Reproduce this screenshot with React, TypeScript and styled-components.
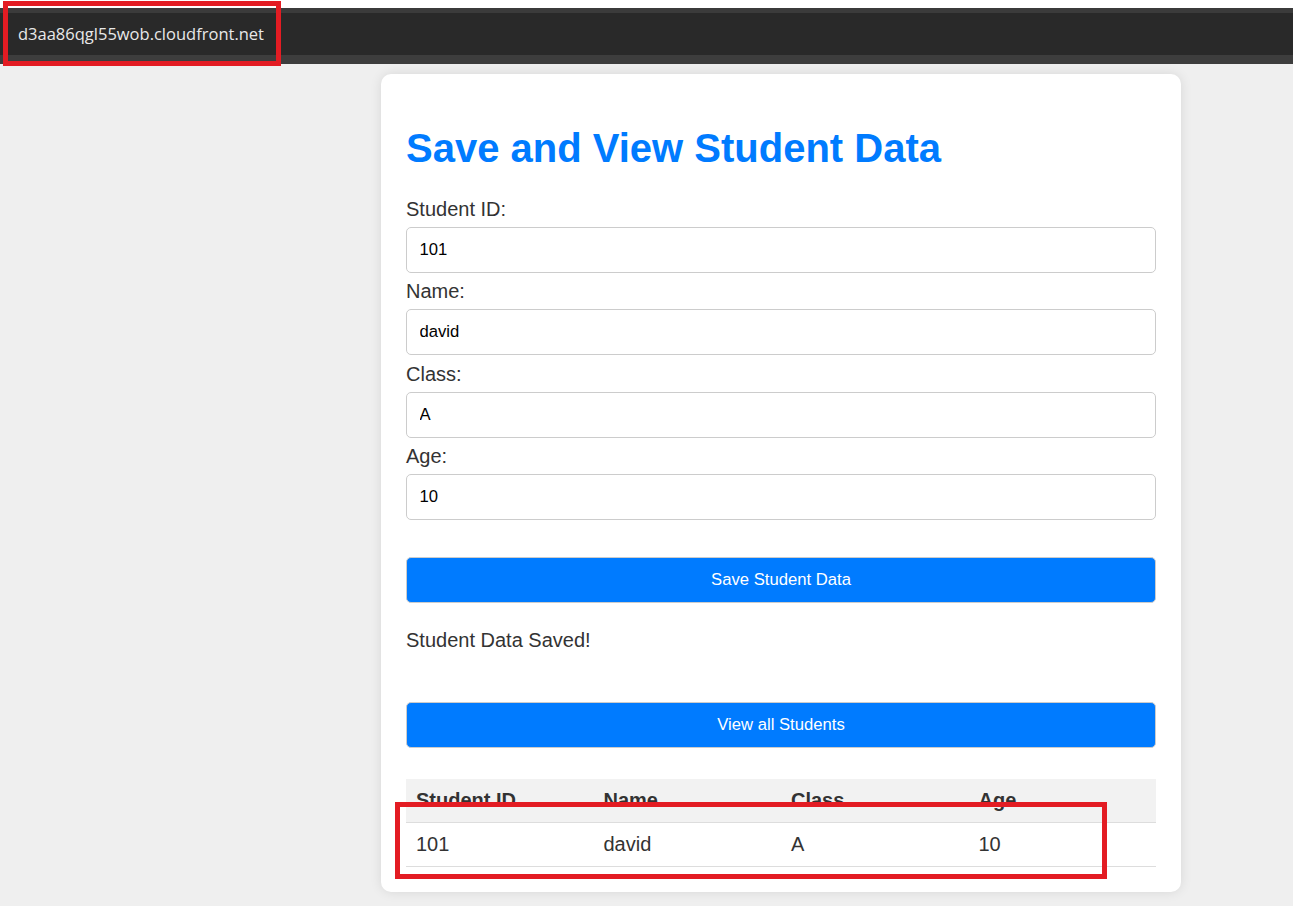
import React from "react";
import styled, { createGlobalStyle } from "styled-components";

const Global = createGlobalStyle`
  html, body { margin: 0; padding: 0; background: #efefef; }
  body { font-family: "Liberation Sans", Arial, sans-serif; }
  * { box-sizing: border-box; }
`;

const Page = styled.div`
  position: relative;
  min-height: 906px;
  background: #efefef;
`;

const BrowserBar = styled.div`
  height: 64px;
  border-top: 8px solid #ffffff;
  background: #292929;
  box-shadow: inset 0 5px 0 #3b3b3b, inset 0 -9px 0 #3d3d3d;
  display: flex;
  align-items: center;
  padding: 0 0 0 18px;
`;

const Url = styled.span`
  font-family: "Open Sans", "Noto Sans", sans-serif;
  font-size: 16.5px;
  color: #e8e8e8;
  margin-top: -6px;
`;

const Main = styled.div`
  padding: 10px 0 0 381px;
`;

const Card = styled.div`
  width: 800px;
  background: #ffffff;
  border-radius: 10px;
  box-shadow: 0 0 12px rgba(0, 0, 0, 0.1);
  padding: 25px;
  color: #333;
`;

const Title = styled.h1`
  margin: 26px 0 25.5px;
  font-size: 40px;
  line-height: 46px;
  font-weight: bold;
  color: #007bff;
`;

const Label = styled.label`
  display: block;
  font-size: 20px;
  line-height: 24px;
  color: #333;
`;

const Input = styled.input`
  display: block;
  width: 100%;
  height: 46px;
  margin: 6.25px 0;
  padding: 0 12.5px;
  border: 1px solid #ccc;
  border-radius: 5px;
  font-family: "Liberation Sans", Arial, sans-serif;
  font-size: 16.67px;
  color: #000;
  background: #fff;
  outline: none;
`;

const Button = styled.button<{ $top: number }>`
  display: block;
  width: 100%;
  height: 46px;
  margin-top: ${(p) => p.$top}px;
  border: 1px solid #ccc;
  border-radius: 5px;
  background: #007bff;
  color: #fff;
  font-family: "Liberation Sans", Arial, sans-serif;
  font-size: 16.67px;
  cursor: pointer;
`;

const Message = styled.p`
  margin: 26px 0 0;
  font-size: 20px;
  line-height: 23px;
  color: #333;
`;

const Table = styled.table`
  width: 100%;
  margin-top: 31px;
  border-collapse: collapse;
  table-layout: fixed;
  font-size: 20px;
`;

const Th = styled.th`
  text-align: left;
  padding: 10px;
  line-height: 23px;
  background: #f2f2f2;
  border-bottom: 1px solid #ddd;
  font-weight: bold;
  color: #333;
`;

const Td = styled.td`
  padding: 10px;
  line-height: 23px;
  border-bottom: 1px solid #ddd;
  color: #333;
`;

const Mark = styled.div<{ $x: number; $y: number; $w: number; $h: number }>`
  position: absolute;
  left: ${(p) => p.$x}px;
  top: ${(p) => p.$y}px;
  width: ${(p) => p.$w}px;
  height: ${(p) => p.$h}px;
  border: 5px solid #e31c23;
  pointer-events: none;
`;

const fields = [
  { label: "Student ID:", value: "101" },
  { label: "Name:", value: "david" },
  { label: "Class:", value: "A" },
  { label: "Age:", value: "10" },
];

export default function App() {
  return (
    <Page>
      <Global />
      <BrowserBar>
        <Url>d3aa86qgl55wob.cloudfront.net</Url>
      </BrowserBar>
      <Main>
        <Card>
          <Title>Save and View Student Data</Title>
          {fields.map((f) => (
            <React.Fragment key={f.label}>
              <Label>{f.label}</Label>
              <Input defaultValue={f.value} />
            </React.Fragment>
          ))}
          <Button $top={37}>Save Student Data</Button>
          <Message>Student Data Saved!</Message>
          <Button $top={50}>View all Students</Button>
          <Table>
            <thead>
              <tr>
                <Th>Student ID</Th>
                <Th>Name</Th>
                <Th>Class</Th>
                <Th>Age</Th>
              </tr>
            </thead>
            <tbody>
              <tr>
                <Td>101</Td>
                <Td>david</Td>
                <Td>A</Td>
                <Td>10</Td>
              </tr>
            </tbody>
          </Table>
        </Card>
      </Main>
      <Mark $x={3} $y={1} $w={278} $h={65} />
      <Mark $x={395} $y={802} $w={712} $h={77} />
    </Page>
  );
}
